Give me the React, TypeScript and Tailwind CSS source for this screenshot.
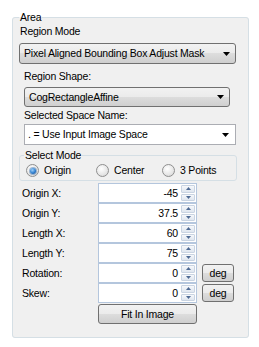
import React from "react";

const font = "font-['Liberation_Sans',Arial,sans-serif]";

function Arrow() {
  return (
    <svg width="7" height="4" viewBox="0 0 7 4" className="shrink-0">
      <path d="M0 0 H7 L3.5 4 Z" fill="#000" />
    </svg>
  );
}

function ButtonCombo({ text, className }: { text: string; className: string }) {
  return (
    <div
      className={`flex items-center justify-between rounded-[3px] border border-[#707070] bg-[linear-gradient(#f2f2f2_0%,#ebebeb_50%,#dddddd_50%,#cfcfcf_100%)] pl-[4px] pr-[5px] ${className}`}
    >
      <span className="leading-[13px]">{text}</span>
      <Arrow />
    </div>
  );
}

function Radio({ label, checked }: { label: string; checked?: boolean }) {
  return (
    <div className="flex items-center gap-[5px]">
      <div className="flex h-[13px] w-[13px] items-center justify-center rounded-full border border-[#8f8f8f] bg-[radial-gradient(circle_at_40%_35%,#ffffff,#e6e6e6_60%,#d0d0d0)]">
        {checked ? (
          <div className="h-[6px] w-[6px] rounded-full bg-[radial-gradient(circle_at_40%_35%,#9fd0f8,#2f7fcf_55%,#0d3f82)] ring-1 ring-[#1e5a9a]/40" />
        ) : null}
      </div>
      <span className="leading-[13px]">{label}</span>
    </div>
  );
}

function SpinArrow({ up }: { up?: boolean }) {
  return (
    <svg width="5" height="3" viewBox="0 0 5 3">
      <path d={up ? "M0 3 H5 L2.5 0 Z" : "M0 0 H5 L2.5 3 Z"} fill="#4e6a93" />
    </svg>
  );
}

function NumRow({ label, value, unit }: { label: string; value: string; unit?: boolean }) {
  return (
    <div className="flex h-[20px] items-center">
      <span className="ml-[9px] w-[76px] leading-[13px]">{label}</span>
      <div className="flex h-[20px] w-[99px] items-stretch border border-[#b4c6dd] bg-white">
        <div className="flex flex-1 items-center justify-end pr-[3px] leading-[13px]">{value}</div>
        <div className="flex w-[15px] flex-col gap-[1px] py-[1px] pr-[1px]">
          <div className="flex flex-1 items-center justify-center rounded-[1px] border border-[#c9d4e2] bg-[linear-gradient(#f6f8fb,#dfe6ef)]">
            <SpinArrow up />
          </div>
          <div className="flex flex-1 items-center justify-center rounded-[1px] border border-[#c9d4e2] bg-[linear-gradient(#f6f8fb,#dfe6ef)]">
            <SpinArrow />
          </div>
        </div>
      </div>
      {unit ? (
        <div className="ml-[5px] flex h-[18px] w-[32px] items-center justify-center rounded-[3px] border border-[#707070] bg-[linear-gradient(#f2f2f2_0%,#ebebeb_50%,#dddddd_50%,#cfcfcf_100%)] leading-[13px]">
          deg
        </div>
      ) : null}
    </div>
  );
}

export default function App() {
  return (
    <div
      className={`min-h-[347px] w-[259px] bg-white pl-[12px] pt-[11px] text-[10.5px] tracking-[-0.2px] text-black ${font}`}
    >
      <fieldset className="flex h-[327px] w-[237px] flex-col rounded-[3px] border border-[#d5dfe5] bg-[#f0f0f0]">
        <legend className="ml-[6px] px-[1px] leading-[12px]">Area</legend>

        <span className="ml-[7px] mt-[2px] leading-[13px]">Region Mode</span>
        <ButtonCombo
          text="Pixel Aligned Bounding Box Adjust Mask"
          className="ml-[6px] mt-[5px] h-[21px] w-[217px]"
        />

        <span className="ml-[11px] mt-[6px] leading-[13px]">Region Shape:</span>
        <ButtonCombo text="CogRectangleAffine" className="ml-[11px] mt-[4px] h-[20px] w-[206px]" />

        <span className="ml-[11px] mt-[2px] leading-[13px]">Selected Space Name:</span>
        <div className="ml-[11px] mt-[2px] flex h-[21px] w-[212px] items-center justify-between border border-[#abadb3] bg-white pl-[3px] pr-[6px]">
          <span className="leading-[13px]">. = Use Input Image Space</span>
          <Arrow />
        </div>

        <fieldset className="ml-[6px] mt-[4px] h-[32px] w-[218px] rounded-[3px] border border-[#d5dfe5]">
          <legend className="ml-[4px] px-[1px] leading-[13px]">Select Mode</legend>
          <div className="flex items-center pl-[6px] pt-[2px]">
            <div className="w-[70px]">
              <Radio label="Origin" checked />
            </div>
            <div className="w-[66px]">
              <Radio label="Center" />
            </div>
            <Radio label="3 Points" />
          </div>
        </fieldset>

        <div className="mt-[2px] flex flex-col">
          <NumRow label="Origin X:" value="-45" />
          <NumRow label="Origin Y:" value="37.5" />
          <NumRow label="Length X:" value="60" />
          <NumRow label="Length Y:" value="75" />
          <NumRow label="Rotation:" value="0" unit />
          <NumRow label="Skew:" value="0" unit />
        </div>

        <div className="ml-[85px] mt-[1px] flex h-[20px] w-[99px] items-center justify-center rounded-[3px] border border-[#707070] bg-[linear-gradient(#f2f2f2_0%,#ebebeb_50%,#dddddd_50%,#cfcfcf_100%)] leading-[13px]">
          Fit In Image
        </div>
      </fieldset>
    </div>
  );
}
